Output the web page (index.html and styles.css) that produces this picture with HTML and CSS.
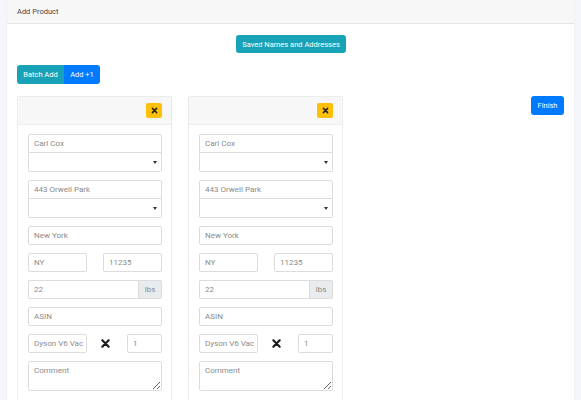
FILE: index.html
```html
<!DOCTYPE html>
<html lang="en">
  <head>
    <meta charset="UTF-8" />
    <meta name="viewport" content="width=device-width, initial-scale=1.0" />
    <title>Add Product</title>
    <link rel="stylesheet" href="styles.css">
  </head>
  <body>
    <div class="panel">
      <div class="panel-header">Add Product</div>
      <div class="panel-body">
        <div class="saved-row">
          <button class="btn btn-info">Saved Names and Addresses</button>
        </div>

        <div class="btn-group">
          <button class="btn btn-info">Batch Add</button>
          <button class="btn btn-primary">Add +1</button>
        </div>

        <div class="product-row">
          <!-- first package -->
          <div class="pkg">
            <div class="pkg-header">
              <button class="btn-remove">
                <svg viewBox="0 0 10 10" width="7" height="7"><path d="M2 2 L8 8 M8 2 L2 8" stroke="#222" stroke-width="2.2" stroke-linecap="round"/></svg>
              </button>
            </div>
            <div class="pkg-body">
              <div class="stack">
                <input class="field top" value="Carl Cox">
                <div class="select-wrap"><select class="field bottom"><option></option></select></div>
              </div>
              <div class="stack">
                <input class="field top" value="443 Orwell Park">
                <div class="select-wrap"><select class="field bottom"><option></option></select></div>
              </div>
              <input class="field" value="New York">
              <div class="pair">
                <input class="field" value="NY">
                <input class="field" value="11235">
              </div>
              <div class="addon-group">
                <input class="field" value="22">
                <span class="addon">lbs</span>
              </div>
              <input class="field" value="ASIN">
              <div class="qty-row">
                <input class="field item" value="Dyson V6 Vac">
                <svg class="times" viewBox="0 0 10 10" width="9" height="9"><path d="M1.5 1.5 L8.5 8.5 M8.5 1.5 L1.5 8.5" stroke="#1a1a1a" stroke-width="2.4" stroke-linecap="round"/></svg>
                <input class="field qty" value="1">
              </div>
              <textarea class="field comment" placeholder="Comment"></textarea>
            </div>
          </div>

          <!-- second package -->
          <div class="pkg">
            <div class="pkg-header">
              <button class="btn-remove">
                <svg viewBox="0 0 10 10" width="7" height="7"><path d="M2 2 L8 8 M8 2 L2 8" stroke="#222" stroke-width="2.2" stroke-linecap="round"/></svg>
              </button>
            </div>
            <div class="pkg-body">
              <div class="stack">
                <input class="field top" value="Carl Cox">
                <div class="select-wrap"><select class="field bottom"><option></option></select></div>
              </div>
              <div class="stack">
                <input class="field top" value="443 Orwell Park">
                <div class="select-wrap"><select class="field bottom"><option></option></select></div>
              </div>
              <input class="field" value="New York">
              <div class="pair">
                <input class="field" value="NY">
                <input class="field" value="11235">
              </div>
              <div class="addon-group">
                <input class="field" value="22">
                <span class="addon">lbs</span>
              </div>
              <input class="field" value="ASIN">
              <div class="qty-row">
                <input class="field item" value="Dyson V6 Vac">
                <svg class="times" viewBox="0 0 10 10" width="9" height="9"><path d="M1.5 1.5 L8.5 8.5 M8.5 1.5 L1.5 8.5" stroke="#1a1a1a" stroke-width="2.4" stroke-linecap="round"/></svg>
                <input class="field qty" value="1">
              </div>
              <textarea class="field comment" placeholder="Comment"></textarea>
            </div>
          </div>

          <button class="btn btn-primary finish">Finish</button>
        </div>
      </div>
    </div>
  </body>
</html>
```

FILE: styles.css
```css
body {
  font-family: Roboto, "Liberation Sans", Arial, sans-serif;
  margin: 0;
  padding: 0 7px;
  background-color: #f4f6f9;
  color: #333;
  height: 400px;
  overflow: hidden;
}

.panel {
  background-color: #fff;
  min-height: 400px;
  box-shadow: 0 0 1px rgba(0, 0, 0, 0.12);
}
.panel-header {
  background-color: #f7f7f7;
  border-bottom: 1px solid #e6e6e6;
  height: 24px;
  box-sizing: border-box;
  padding: 0 10px;
  font-size: 7.5px;
  line-height: 24px;
  color: #444;
}
.panel-body {
  padding: 11px 10px 0;
}

.btn {
  font-family: inherit;
  font-size: 7.5px;
  font-weight: 400;
  color: #fff;
  border: none;
  border-radius: 3px;
  height: 19px;
  padding: 0 7px;
  cursor: pointer;
}
.btn-info {
  background-color: #17a2b8;
}
.btn-primary {
  background-color: #007bff;
}

.saved-row {
  display: flex;
  justify-content: center;
  padding-left: 1px;
}
.saved-row .btn {
  height: 18px;
  width: 110px;
  padding: 0;
}

.btn-group {
  display: flex;
  margin-top: 12px;
}
.btn-group .btn {
  border-radius: 0;
}
.btn-group .btn:first-child {
  border-radius: 3px 0 0 3px;
  width: 47px;
  padding: 0;
}
.btn-group .btn:last-child {
  border-radius: 0 3px 3px 0;
  width: 36px;
  padding: 0;
}

.product-row {
  display: flex;
  align-items: flex-start;
  gap: 16px;
  margin-top: 12px;
}

.pkg {
  width: 155px;
  border: 1px solid #ebebeb;
  border-radius: 2px;
  box-sizing: border-box;
}
.pkg-header {
  background-color: #f7f7f7;
  border-bottom: 1px solid #ededed;
  height: 28px;
  box-sizing: border-box;
  display: flex;
  justify-content: flex-end;
  align-items: center;
  padding: 0 9px 1px;
}
.btn-remove {
  width: 16px;
  height: 15px;
  background-color: #ffc107;
  border: none;
  border-radius: 2px;
  padding: 0;
  display: flex;
  align-items: center;
  justify-content: center;
}
.pkg-body {
  padding: 9px 9px 12px 10px;
  display: flex;
  flex-direction: column;
  gap: 8px;
}

.field {
  display: block;
  font-family: inherit;
  font-size: 8px;
  color: #8a8a8a;
  border: 1px solid #dcdcdc;
  border-radius: 2px;
  height: 19px;
  box-sizing: border-box;
  padding: 0 5px;
  width: 100%;
  margin: 0;
  background-color: #fff;
  outline: none;
}
.stack {
  display: flex;
  flex-direction: column;
}
.field.top {
  border-radius: 2px 2px 0 0;
}
.field.bottom {
  border-radius: 0 0 2px 2px;
  border-top: none;
  -webkit-appearance: none;
  appearance: none;
}
.select-wrap {
  position: relative;
  height: 19px;
}
.select-wrap::after {
  content: "";
  position: absolute;
  right: 5px;
  top: 8px;
  border-left: 2px solid transparent;
  border-right: 2px solid transparent;
  border-top: 3px solid #333;
}

.pair {
  display: flex;
  justify-content: space-between;
}
.pair .field {
  width: 59px;
}

.addon-group {
  display: flex;
}
.addon-group .field {
  border-radius: 2px 0 0 2px;
  border-right: none;
}
.addon {
  width: 24px;
  flex-shrink: 0;
  height: 19px;
  box-sizing: border-box;
  background-color: #e9ecef;
  border: 1px solid #dcdcdc;
  border-radius: 0 2px 2px 0;
  font-size: 8px;
  color: #8a8a8a;
  display: flex;
  align-items: center;
  justify-content: center;
}

.qty-row {
  display: flex;
  align-items: center;
}
.qty-row .item {
  width: 59px;
  padding-right: 0;
}
.times {
  margin: 0 0 0 14px;
}
.qty-row .qty {
  width: 35px;
  margin-left: auto;
}

.comment {
  height: 30px;
  padding: 4px 5px;
  resize: vertical;
}
.comment::placeholder {
  color: #8a8a8a;
}

.finish {
  margin-left: auto;
  width: 33px;
  padding: 0;
}
```
